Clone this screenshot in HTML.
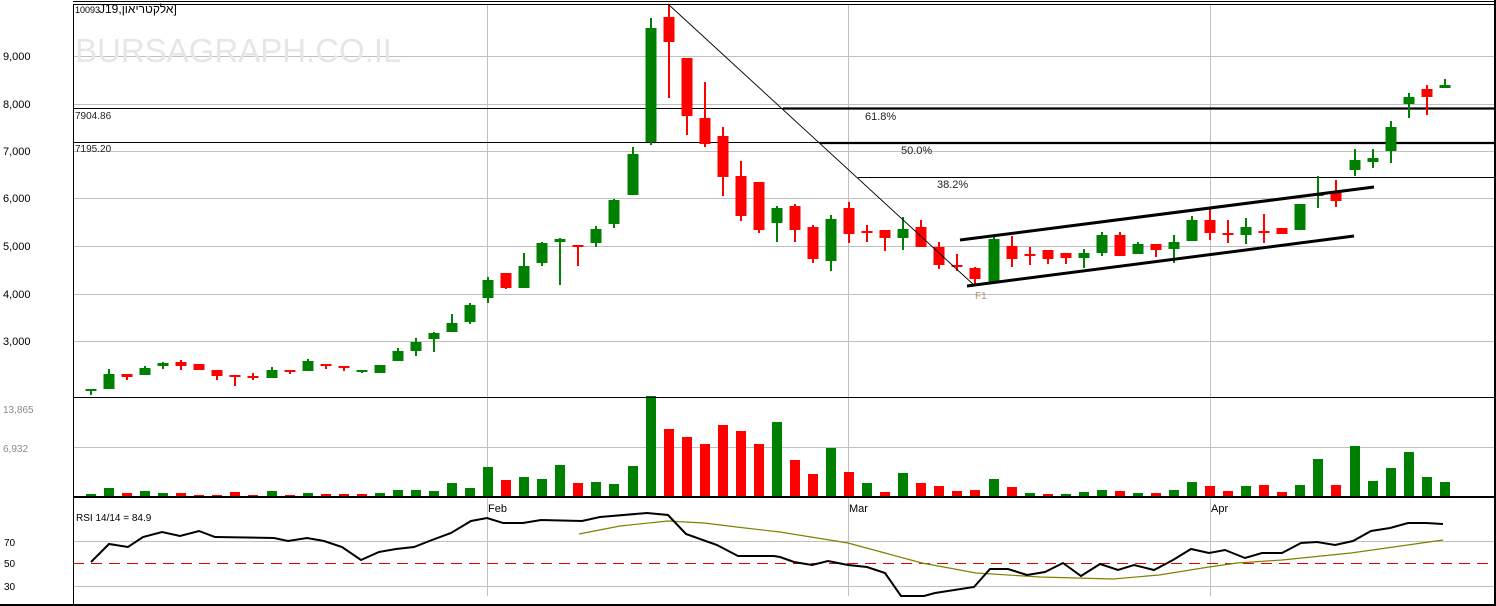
<!DOCTYPE html>
<html><head><meta charset="utf-8"><style>
html,body{margin:0;padding:0;background:#fff;width:1496px;height:606px;overflow:hidden}
svg{display:block}
text{font-family:"Liberation Sans",sans-serif}
</style></head><body>
<svg id="s" width="1496" height="606" xmlns="http://www.w3.org/2000/svg">
<rect width="1496" height="606" fill="#fff"/>
<g stroke="#c0c0c0" stroke-width="1">
<line x1="73" y1="56.5" x2="1495" y2="56.5"/>
<line x1="73" y1="104.5" x2="1495" y2="104.5"/>
<line x1="73" y1="151.5" x2="1495" y2="151.5"/>
<line x1="73" y1="198.5" x2="1495" y2="198.5"/>
<line x1="73" y1="246.5" x2="1495" y2="246.5"/>
<line x1="73" y1="294.5" x2="1495" y2="294.5"/>
<line x1="73" y1="341.5" x2="1495" y2="341.5"/>
<line x1="73" y1="447.5" x2="1495" y2="447.5"/>
<line x1="73" y1="541.5" x2="1495" y2="541.5"/>
<line x1="73" y1="586.5" x2="1495" y2="586.5"/>
<line x1="487.5" y1="4" x2="487.5" y2="596"/>
<line x1="848.5" y1="4" x2="848.5" y2="596"/>
<line x1="1210.5" y1="4" x2="1210.5" y2="596"/>
</g>
<line x1="73" y1="563.5" x2="1495" y2="563.5" stroke="#e00000" stroke-width="1" stroke-dasharray="11,7"/>
<text x="75" y="62" font-size="33" fill="#e6e6e6">BURSAGRAPH.CO.IL</text>
<line x1="73" y1="108.5" x2="1495" y2="108.5" stroke="#000" stroke-width="1"/>
<line x1="783" y1="108.5" x2="1495" y2="108.5" stroke="#000" stroke-width="2.2"/>
<line x1="73" y1="142.5" x2="1495" y2="142.5" stroke="#000" stroke-width="1"/>
<line x1="820" y1="143" x2="1495" y2="143" stroke="#000" stroke-width="2.2"/>
<line x1="858" y1="177.5" x2="1495" y2="177.5" stroke="#000" stroke-width="1"/>
<text x="865" y="120" font-size="11" fill="#222">61.8%</text>
<text x="901" y="154" font-size="11" fill="#222">50.0%</text>
<text x="937" y="188" font-size="11" fill="#222">38.2%</text>
<text x="75" y="119" font-size="10" fill="#222">7904.86</text>
<text x="75" y="152" font-size="10" fill="#222">7195.20</text>
<g id="candles"></g>
<g id="vol"></g>
<line x1="668" y1="4" x2="975" y2="286" stroke="#000" stroke-width="0.9"/>
<line x1="960" y1="240" x2="1374" y2="187" stroke="#000" stroke-width="3"/>
<line x1="967" y1="286" x2="1354" y2="236" stroke="#000" stroke-width="3"/>
<text x="975" y="299" font-size="10" fill="#b09070">F1</text>
<g stroke="#000">
<line x1="73" y1="1.5" x2="1496" y2="1.5" stroke-width="1"/>
<line x1="73" y1="4.5" x2="1496" y2="4.5" stroke-width="1"/>
<line x1="73.5" y1="4" x2="73.5" y2="604" stroke-width="1"/>
<line x1="1495" y1="0" x2="1495" y2="604" stroke-width="2"/>
<line x1="73" y1="397.5" x2="1496" y2="397.5" stroke-width="1"/>
<line x1="73" y1="497" x2="1496" y2="497" stroke-width="2"/>
<line x1="0" y1="605" x2="1496" y2="605" stroke-width="2"/>
</g>
<text x="75" y="13" font-size="9" fill="#000">10093</text>
<text x="99" y="13" font-size="12" fill="#000" font-family="Liberation Sans, DejaVu Sans, sans-serif">J19,אלקטריאון]</text>
<g font-size="11" fill="#000">
<text x="3" y="60">9,000</text><text x="3" y="108">8,000</text><text x="3" y="155">7,000</text>
<text x="3" y="202">6,000</text><text x="3" y="250">5,000</text><text x="3" y="298">4,000</text><text x="3" y="345">3,000</text>
</g>
<g font-size="10" fill="#8a8a8a"><text x="3" y="413">13,865</text><text x="3" y="452">6,932</text></g>
<g font-size="10" fill="#000"><text x="4" y="546">70</text><text x="4" y="567">50</text><text x="4" y="590">30</text></g>
<text x="76" y="521" font-size="10" fill="#000">RSI 14/14 = 84.9</text>
<g font-size="11" fill="#000"><text x="488" y="512">Feb</text><text x="849" y="512">Mar</text><text x="1211" y="512">Apr</text></g>
<polyline fill="none" stroke="#808000" stroke-width="1.2" points="579,534 620,526 668,521 704,523 745,528 780,532 848,543 885,553 922,563 976,573 1040,577 1113,579 1159,575 1209,567 1237,563 1282,560 1351,553 1443,540"/>
<polyline fill="none" stroke="#000" stroke-width="2" points="91,562 109,544 128,547 143,537 162,532 180,536 199,531 215,537 274,538 288,541 307,538 324,541 342,547 361,560 379,552 396,549 414,547 432,540 451,533 471,521 487,518 503,523 523,523 541,520 582,521 600,517 647,513 668,515 686,534 717,545 738,556 774,556 780,557 794,562 812,565 828,561 848,565 867,567 885,573 901,596 924,596 935,593 974,587 990,569 1008,569 1027,575 1045,572 1063,563 1081,576 1100,564 1118,570 1134,565 1154,570 1173,560 1191,549 1209,553 1225,550 1245,558 1262,553 1282,553 1301,543 1317,542 1335,545 1353,541 1371,531 1390,528 1408,523 1426,523 1443,524"/>
</svg>
<script>
var G="#008000",R="#ff0000";
var c=[
[389,390,389,395,G],[374,389,369,389,G],[374,377,374,380,R],[368,375,366,375,G],[363,366,362,369,G],[362,366,360,370,R],[364,370,364,370,R],[370,376,370,380,R],[375,376,375,386,R],[376,378,373,380,R],
[370,378,367,378,G],[370,371,370,374,R],[361,371,359,371,G],[364,365,364,369,R],[366,367,366,371,R],[370,372,370,373,G],[365,373,365,373,G],[351,361,348,361,G],[342,351,338,356,G],[333,339,332,352,G],
[323,332,314,332,G],[305,322,303,324,G],[280,298,277,303,G],[273,288,273,289,R],[266,288,253,288,G],[243,263,242,266,G],[239,242,238,285,G],[245,246,245,266,R],[229,243,226,247,G],[200,224,199,228,G],
[154,195,147,195,G],[28,142,18,145,G],[17,42,4,98,R],[58,116,58,135,R],[118,144,82,147,R],[136,177,127,196,R],[176,216,161,221,R],[182,230,182,233,R],[208,223,206,242,G],[206,230,204,242,R],
[227,259,225,263,R],[219,261,215,271,G],[208,234,202,243,R],[231,233,225,242,R],[230,238,230,251,R],[229,238,217,250,G],[227,247,220,247,R],[247,265,242,269,R],[265,267,254,271,R],[268,279,267,284,R],
[239,283,237,283,G],[246,259,236,267,R],[254,256,247,265,R],[250,259,250,264,R],[253,258,253,264,R],[253,258,249,268,G],[235,253,232,256,G],[235,256,232,256,R],[244,254,242,254,G],[244,250,244,257,R],
[242,249,235,263,G],[220,241,216,241,G],[220,233,209,240,R],[233,235,220,243,R],[227,235,218,244,G],[231,233,214,243,R],[228,234,228,234,R],[204,230,204,230,G],[194,196,176,208,G],[191,201,180,207,R],
[160,170,149,176,G],[158,162,149,168,G],[127,151,121,163,G],[97,104,93,118,G],[89,97,85,115,R],[85,88,79,88,G]];
var vh=[2,8,3,5,3,3,1,1,4,1,5,1,3,2,2,2,3,6,6,5,13,8,29,16,19,17,31,13,14,12,30,100,67,59,52,71,65,52,74,
36,22,48,24,13,4,23,13,10,5,6,17,9,3,2,2,4,6,5,3,3,6,14,10,5,10,11,4,11,37,11,50,15,28,44,19,14];
var vc="GGRGGRRRRRGRGRRRGGGGGGGRGGGRGGGGRRRRRRG"+"RRGRGRGRRRRGRGRGGGRGRGGRRGRRGGRGGGGGG";
var s="",v="",i;
for(i=0;i<c.length;i++){var x=Math.round(91+18.05*i),d=c[i];
s+='<rect x="'+(x-1)+'" y="'+d[2]+'" width="2" height="'+(d[3]-d[2])+'" fill="'+d[4]+'"/>';
var h=Math.max(2,d[1]-d[0]);
s+='<rect x="'+(x-5.5)+'" y="'+d[0]+'" width="11" height="'+h+'" fill="'+d[4]+'"/>';
var hh=vh[i];v+='<rect x="'+(x-5)+'" y="'+(496-hh)+'" width="10" height="'+hh+'" fill="'+(vc[i]=="G"?G:R)+'"/>';}
document.getElementById("candles").innerHTML=s;
document.getElementById("vol").innerHTML=v;
</script>
</body></html>
